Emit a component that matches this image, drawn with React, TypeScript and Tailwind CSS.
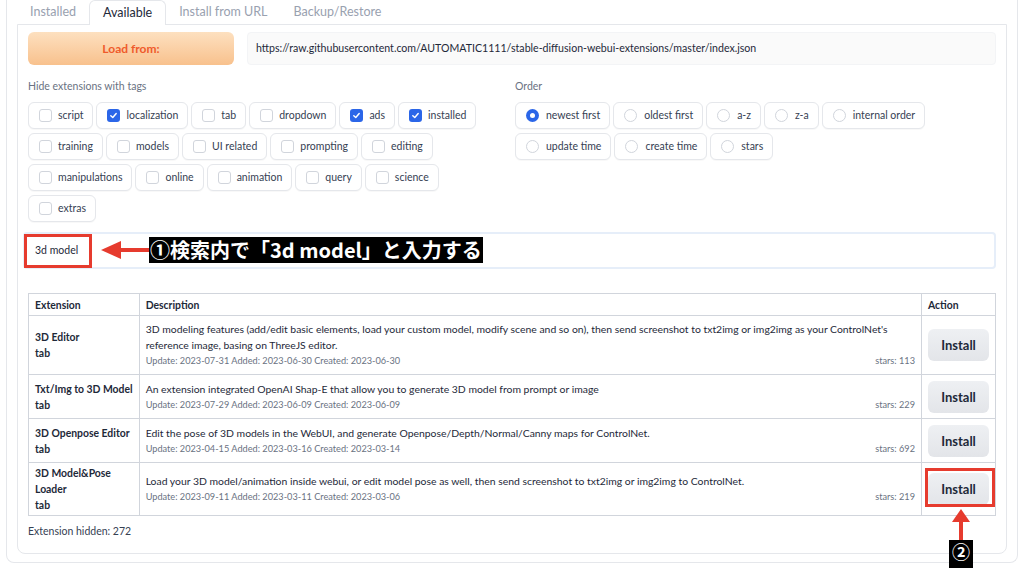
import React from "react";

const tagRows: [string, boolean][][] = [
  [["script", false], ["localization", true], ["tab", false], ["dropdown", false], ["ads", true], ["installed", true]],
  [["training", false], ["models", false], ["UI related", false], ["prompting", false], ["editing", false]],
  [["manipulations", false], ["online", false], ["animation", false], ["query", false], ["science", false]],
  [["extras", false]],
];

const orderRows: string[][] = [
  ["newest first", "oldest first", "a-z", "z-a", "internal order"],
  ["update time", "create time", "stars"],
];

const extensions = [
  {
    name: ["3D Editor"],
    desc: "3D modeling features (add/edit basic elements, load your custom model, modify scene and so on), then send screenshot to txt2img or img2img as your ControlNet's reference image, basing on ThreeJS editor.",
    dates: "Update: 2023-07-31 Added: 2023-06-30 Created: 2023-06-30",
    stars: 113,
    h: "h-[59px]",
  },
  {
    name: ["Txt/Img to 3D Model"],
    desc: "An extension integrated OpenAI Shap-E that allow you to generate 3D model from prompt or image",
    dates: "Update: 2023-07-29 Added: 2023-06-09 Created: 2023-06-09",
    stars: 229,
    h: "h-[44px]",
  },
  {
    name: ["3D Openpose Editor"],
    desc: "Edit the pose of 3D models in the WebUI, and generate Openpose/Depth/Normal/Canny maps for ControlNet.",
    dates: "Update: 2023-04-15 Added: 2023-03-16 Created: 2023-03-14",
    stars: 692,
    h: "h-[44px]",
  },
  {
    name: ["3D Model&Pose", "Loader"],
    desc: "Load your 3D model/animation inside webui, or edit model pose as well, then send screenshot to txt2img or img2img to ControlNet.",
    dates: "Update: 2023-09-11 Added: 2023-03-11 Created: 2023-03-06",
    stars: 219,
    h: "h-[53px]",
  },
];

function Check({ on }: { on: boolean }) {
  if (on)
    return (
      <span className="flex h-[13px] w-[13px] items-center justify-center rounded-[3px] bg-[#2b66e8]">
        <svg width="9" height="9" viewBox="0 0 10 10">
          <path d="M2 5.2 L4.2 7.3 L8 2.8" fill="none" stroke="white" strokeWidth="1.6" strokeLinecap="round" strokeLinejoin="round" />
        </svg>
      </span>
    );
  return <span className="h-[13px] w-[13px] rounded-[3px] border border-gray-300 bg-white" />;
}

function Radio({ on }: { on: boolean }) {
  if (on)
    return (
      <span className="flex h-[13px] w-[13px] items-center justify-center rounded-full bg-[#2b66e8]">
        <span className="h-[5px] w-[5px] rounded-full bg-white" />
      </span>
    );
  return <span className="h-[13px] w-[13px] rounded-full border border-gray-300 bg-white" />;
}

function Pill({ children, radio }: { children: React.ReactNode; radio?: boolean }) {
  return (
    <div
      className={
        radio
          ? "flex h-[27px] items-center gap-[7px] rounded-md border border-gray-200 bg-white pl-[10px] pr-[9px] text-[10.5px] text-gray-700 shadow-[0_1px_1px_rgba(0,0,0,0.03)]"
          : "flex h-[27px] items-center gap-[6px] rounded-md border border-gray-200 bg-white pl-[10px] pr-[9px] text-[10.5px] text-gray-700 shadow-[0_1px_1px_rgba(0,0,0,0.03)]"
      }
    >
      {children}
    </div>
  );
}

export default function App() {
  return (
    <div className="relative h-[568px] w-[1024px] overflow-hidden bg-white font-['Lato','Noto_Sans_CJK_JP',sans-serif] text-gray-700">
      <div className="mx-[6px] rounded-b-lg border-x border-b border-gray-200 px-[10px] pb-[8px]">
        {/* tabs */}
        <div className="flex h-[24px] text-[12.5px]">
          <div className="flex items-center px-[13px] text-gray-400">Installed</div>
          <div className="relative z-10 -mb-px flex items-center rounded-t-md border border-b-0 border-gray-200 bg-white px-[13px] text-gray-800">Available</div>
          <div className="flex items-center px-[13px] text-gray-400">Install from URL</div>
          <div className="flex items-center px-[13px] text-gray-400">Backup/Restore</div>
        </div>

        <div className="rounded-b-lg border border-gray-200 px-[10px] pt-[7px] pb-[15px]">
          {/* load row */}
          <div className="flex gap-[13px]">
            <div className="flex h-[33px] w-[206px] items-center justify-center rounded-md bg-gradient-to-b from-[#fde0bf] to-[#f8c18d] text-[12px] font-bold text-[#ef5b2b]">
              Load from:
            </div>
            <div className="flex h-[33px] flex-1 items-center rounded-sm border border-gray-100 bg-[#fafafa] px-[8px] text-[10.6px] text-gray-800">
              https://raw.githubusercontent.com/AUTOMATIC1111/stable-diffusion-webui-extensions/master/index.json
            </div>
          </div>

          {/* filters */}
          <div className="mt-[14px] grid grid-cols-[475px_1fr] gap-[12px]">
            <div>
              <div className="text-[10.5px] leading-[14px] text-gray-500">Hide extensions with tags</div>
              <div className="mt-[9px] flex flex-col gap-[4px]">
                {tagRows.map((row, i) => (
                  <div key={i} className="flex gap-[3px]">
                    {row.map(([label, on]) => (
                      <Pill key={label}>
                        <Check on={on} />
                        <span>{label}</span>
                      </Pill>
                    ))}
                  </div>
                ))}
              </div>
            </div>
            <div>
              <div className="text-[10.5px] leading-[14px] text-gray-500">Order</div>
              <div className="mt-[9px] flex flex-col gap-[4px]">
                {orderRows.map((row, i) => (
                  <div key={i} className="flex gap-[3px]">
                    {row.map((label) => (
                      <Pill key={label} radio>
                        <Radio on={label === "newest first"} />
                        <span>{label}</span>
                      </Pill>
                    ))}
                  </div>
                ))}
              </div>
            </div>
          </div>

          {/* search */}
          <div className="mt-[10px] -ml-[5px] flex h-[37px] items-center rounded-sm border-2 border-[#e6eef9] bg-white px-[10px] text-[10.5px] text-gray-800">
            3d model
          </div>

          {/* table */}
          <table className="mt-[24px] w-full border-collapse text-[10.4px] leading-[16px]">
            <thead>
              <tr className="h-[22px] text-left font-bold text-gray-800">
                <th className="w-[110px] border border-gray-300 px-[6px]">Extension</th>
                <th className="border border-gray-300 px-[6px]">Description</th>
                <th className="w-[74px] border border-gray-300 px-[6px]">Action</th>
              </tr>
            </thead>
            <tbody>
              {extensions.map((ext) => (
                <tr key={ext.name.join(" ")} className={ext.h}>
                  <td className="whitespace-nowrap border border-gray-300 px-[6px] align-middle font-bold text-gray-800">
                    {ext.name.map((n) => (
                      <div key={n}>{n}</div>
                    ))}
                    <div>tab</div>
                  </td>
                  <td className="border border-gray-300 px-[6px] align-middle text-gray-800">
                    <div>{ext.desc}</div>
                    <div className="flex justify-between text-[9.2px] text-gray-500">
                      <span>{ext.dates}</span>
                      <span>stars: {ext.stars}</span>
                    </div>
                  </td>
                  <td className="border border-gray-300 px-[6px] align-middle">
                    <div className="flex h-[32px] w-[61px] items-center justify-center rounded-md bg-gradient-to-b from-[#eef0f3] to-[#e3e5e9] text-[13px] font-bold text-gray-800">
                      Install
                    </div>
                  </td>
                </tr>
              ))}
            </tbody>
          </table>

          <div className="mt-[8px] text-[10.5px] leading-[14px] text-gray-700">Extension hidden: 272</div>
        </div>
      </div>

      {/* annotations */}
      <div className="absolute left-[24px] top-[234px] h-[34px] w-[68px] border-[3px] border-[#e63b2e]" />
      <svg className="absolute left-[101px] top-[240px]" width="50" height="20" viewBox="0 0 50 20">
        <rect x="16" y="8" width="34" height="4" fill="#e63b2e" />
        <polygon points="0,10 20,1 20,19" fill="#e63b2e" />
      </svg>
      <div className="absolute left-[149px] top-[237px] flex h-[26px] items-center bg-black px-[1px] font-['Noto_Sans_CJK_JP',sans-serif] text-[20px] font-bold leading-none text-white">
        ①検索内で「3d model」と入力する
      </div>

      <div className="absolute left-[925px] top-[468px] h-[39px] w-[70px] border-[3px] border-[#e63b2e]" />
      <svg className="absolute left-[951px] top-[509px]" width="20" height="32" viewBox="0 0 20 32">
        <polygon points="10,0 1,13 19,13" fill="#e63b2e" />
        <rect x="8" y="12" width="4" height="20" fill="#e63b2e" />
      </svg>
      <div className="absolute left-[949px] top-[540px] flex h-[28px] w-[24px] items-start justify-center bg-black pt-[2px] font-['Noto_Sans_CJK_JP',sans-serif] text-[18px] font-bold leading-none text-white">
        ②
      </div>
    </div>
  );
}
